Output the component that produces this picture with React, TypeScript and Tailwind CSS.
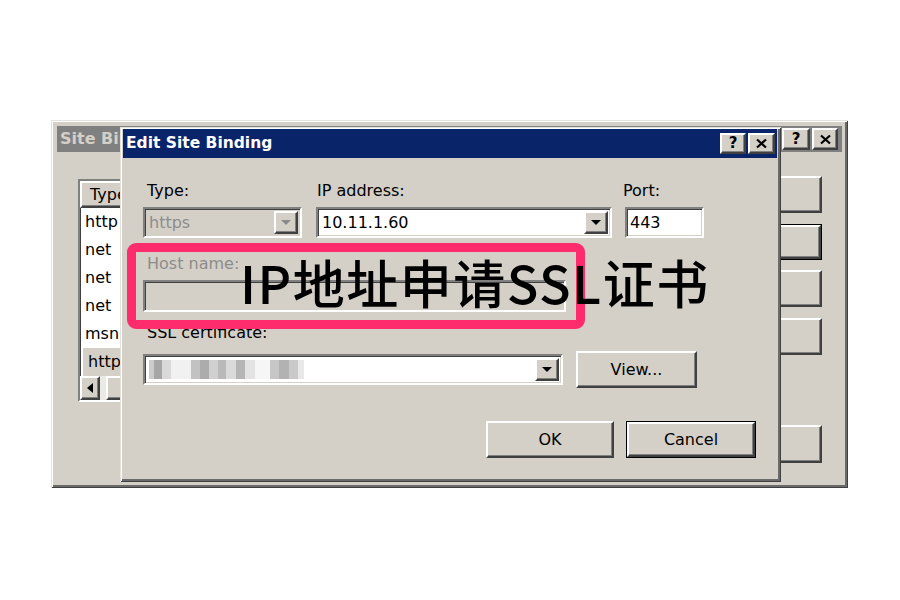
import React from 'react';

const ui = "font-['DejaVu_Sans','Liberation_Sans',sans-serif]";

type BoxProps = { className?: string; children?: React.ReactNode };

// Win2000 style raised face (buttons, arrows)
function Raised({ className = '', children }: BoxProps) {
  return (
    <div
      className={`bg-[#d4d0c8] border-2 border-t-white border-l-white border-r-[#404040] border-b-[#404040] shadow-[inset_-1px_-1px_0_#808080] flex items-center justify-center ${className}`}
    >
      {children}
    </div>
  );
}

// sunken field (edit boxes, combos, list)
function Sunken({ className = '', children }: BoxProps) {
  return (
    <div
      className={`border-2 border-t-[#808080] border-l-[#808080] border-r-white border-b-white shadow-[inset_1px_1px_0_#404040,inset_-1px_-1px_0_#d4d0c8] ${className}`}
    >
      {children}
    </div>
  );
}

function Arrow({ disabled = false }: { disabled?: boolean }) {
  return (
    <Raised className="w-[24px] self-stretch">
      <svg width="10" height="6" viewBox="0 0 10 6">
        <polygon points="0,0 10,0 5,5" fill={disabled ? '#8a8a8a' : '#000'} />
      </svg>
    </Raised>
  );
}

function TitleButton({ kind, className = '' }: { kind: 'help' | 'close'; className?: string }) {
  return (
    <Raised className={className}>
      {kind === 'help' ? (
        <span className="text-[15px] font-bold leading-none text-black">?</span>
      ) : (
        <svg width="13" height="11" viewBox="0 0 13 11">
          <path d="M2 1.5 L11 9.5 M11 1.5 L2 9.5" stroke="#000" strokeWidth="2.2" />
        </svg>
      )}
    </Raised>
  );
}

function PushButton({ label, isDefault = false, className = '' }: { label?: string; isDefault?: boolean; className?: string }) {
  const btn = (
    <Raised className={isDefault ? 'w-full h-full' : className}>
      {label && <span className="text-[16px] text-black">{label}</span>}
    </Raised>
  );
  if (!isDefault) return btn;
  return <div className={`border border-black flex ${className}`}>{btn}</div>;
}

function SiteBindings() {
  const rows = ['http', 'net', 'net', 'net', 'msn', 'http'];
  return (
    <div className="absolute left-[51px] top-[120px] w-[797px] h-[368px] bg-[#d4d0c8] flex flex-col shadow-[inset_1px_1px_0_#e4e2dc,inset_-1px_-1px_0_#404040,inset_2px_2px_0_#fff,inset_-3px_-3px_0_#6a6a6a]">
      <div className="mx-[6px] mt-[6px] h-[26px] bg-[#808080] flex items-center justify-between pl-[3px] pr-[4px]">
        {/* the rest of the title sits under the dialog */}
        <span className="w-[60px] overflow-hidden whitespace-nowrap text-[16px] font-bold text-[#d4d0c8]">Site Bindings</span>
        <div className="flex gap-[2px]">
          <TitleButton kind="help" className="w-[28px] h-[22px]" />
          <TitleButton kind="close" className="w-[26px] h-[22px]" />
        </div>
      </div>

      <div className="flex-1 flex justify-between pl-[27px] pr-[26px] pt-[24px]">
        <Sunken className="mt-[3px] w-[420px] h-[223px] bg-white flex flex-col">
          <Raised className="h-[27px] w-[90px] !justify-start pl-[8px]">
            <span className="text-[16px] text-black">Type</span>
          </Raised>
          {rows.map((r, i) => (
            <div
              key={i}
              className={`h-[28px] flex items-center pl-[5px] text-[16px] text-black ${i === rows.length - 1 ? 'bg-[#d4d0c8] ml-[3px] pl-[2px]' : ''}`}
            >
              {r}
            </div>
          ))}
          <div className="mt-auto h-[24px] flex bg-[#ebe9e4]">
            <Raised className="w-[20px]">
              <svg width="6" height="10" viewBox="0 0 6 10">
                <polygon points="6,0 6,10 0,5" fill="#000" />
              </svg>
            </Raised>
            <Raised className="w-[60px] ml-[6px]" />
          </div>
        </Sunken>

        <div className="w-[122px] flex flex-col">
          <PushButton className="h-[37px]" />
          <PushButton isDefault className="mt-[11px] h-[36px]" />
          <PushButton className="mt-[10px] h-[37px]" />
          <PushButton className="mt-[11px] h-[37px]" />
          <PushButton className="mt-[70px] h-[38px]" />
        </div>
      </div>
    </div>
  );
}

const blur = [
  'w-[5px] bg-[#cbcbcb]',
  'w-[8px] bg-[#a6a6a6]',
  'w-[9px] bg-[#d9d9d9]',
  'w-[20px] bg-[#f1f1f1]',
  'w-[9px] bg-[#c2c2c2]',
  'w-[9px] bg-[#acacac]',
  'w-[9px] bg-[#d0d0d0]',
  'w-[8px] bg-[#b9b9b9]',
  'w-[10px] bg-[#dadada]',
  'w-[9px] bg-[#b5b5b5]',
  'w-[10px] bg-[#e3e3e3]',
  'w-[15px] bg-[#f6f6f6]',
  'w-[9px] bg-[#c7c7c7]',
  'w-[10px] bg-[#b2b2b2]',
  'w-[9px] bg-[#c9c9c9]',
  'w-[6px] bg-[#e8e8e8]',
];

function EditSiteBinding() {
  return (
    <div className="absolute left-[120px] top-[127px] w-[661px] h-[355px] bg-[#d4d0c8] flex flex-col shadow-[inset_1px_1px_0_#e4e2dc,inset_-1px_-1px_0_#404040,inset_2px_2px_0_#fff,inset_-3px_-3px_0_#6a6a6a]">
      <div className="ml-[3px] mr-[4px] mt-[2px] h-[29px] bg-[#0a246a] flex items-center justify-between pl-[3px] pr-[2px]">
        <span className="text-[15.5px] font-bold text-white">Edit Site Binding</span>
        <div className="flex gap-[2px]">
          <TitleButton kind="help" className="w-[26px] h-[21px]" />
          <TitleButton kind="close" className="w-[27px] h-[21px]" />
        </div>
      </div>

      <div className="flex flex-col pl-[23px] pr-[25px] pt-[23px] text-[16px] text-black">
        {/* type / ip / port */}
        <div className="flex gap-[14px]">
          <div className="w-[159px] flex flex-col">
            <div className="h-[20px] leading-[20px] pl-[4px] mb-[6px]">Type:</div>
            <Sunken className="h-[31px] bg-[#d4d0c8] flex p-[2px]">
              <div className="flex-1 flex items-center pl-[2px] text-[#8c8c8c]">https</div>
              <Arrow disabled />
            </Sunken>
          </div>
          <div className="w-[296px] flex flex-col">
            <div className="h-[20px] leading-[20px] pl-[1px] mb-[6px]">IP address:</div>
            <Sunken className="h-[31px] bg-white flex p-[2px]">
              <div className="flex-1 flex items-center pl-[2px]">10.11.1.60</div>
              <Arrow />
            </Sunken>
          </div>
          <div className="w-[79px] ml-[-1px] flex flex-col">
            <div className="h-[20px] leading-[20px] ml-[-2px] mb-[6px]">Port:</div>
            <Sunken className="h-[31px] bg-white flex items-center pl-[3px]">443</Sunken>
          </div>
        </div>

        {/* host name */}
        <div className="mt-[16px] h-[20px] leading-[20px] pl-[4px] mb-[6px] text-[#8c8c8c]">Host name:</div>
        <Sunken className="w-[423px] h-[32px] bg-[#d4d0c8]" />

        {/* ssl certificate */}
        <div className="mt-[11px] h-[20px] leading-[20px] pl-[4px]">SSL certificate:</div>
        <div className="mt-[8px] flex items-center gap-[13px] h-[37px]">
          <Sunken className="w-[420px] h-[31px] bg-white flex p-[2px]">
            <div className="flex-1 flex items-center pl-[2px]">
              {blur.map((c, i) => (
                <div key={i} className={`h-[19px] ${c}`} />
              ))}
            </div>
            <Arrow />
          </Sunken>
          <PushButton label="View..." className="w-[121px] h-[37px]" />
        </div>

        {/* actions */}
        <div className="mt-[33px] flex justify-end gap-[12px]">
          <PushButton label="OK" className="w-[128px] h-[37px]" />
          <PushButton label="Cancel" isDefault className="w-[130px] h-[37px]" />
        </div>
      </div>
    </div>
  );
}

export default function App() {
  return (
    <div className={`relative w-[900px] h-[600px] bg-white overflow-hidden ${ui}`}>
      <SiteBindings />
      <EditSiteBinding />
      {/* highlight around host name */}
      <div className="absolute left-[127px] top-[243px] w-[458px] h-[86px] border-[9px] border-[#fe2c6d] rounded-[9px]" />
      <div className="absolute left-[240px] top-[256px] text-[52px] leading-none font-medium tracking-[1.5px] text-black whitespace-nowrap font-['Noto_Sans_CJK_SC',sans-serif]">
        IP地址申请SSL证书
      </div>
    </div>
  );
}
